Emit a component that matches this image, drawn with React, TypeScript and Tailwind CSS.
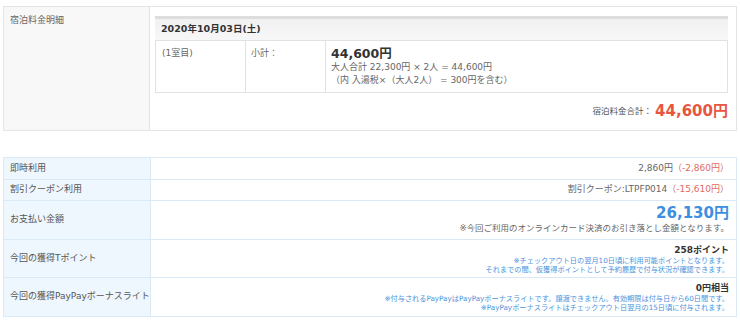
import React from "react";

const font = { fontFamily: '"DejaVu Sans", "Noto Sans CJK JP", sans-serif' };

function Row({
  label,
  h,
  last,
  children,
}: {
  label: string;
  h: string;
  last?: boolean;
  children: React.ReactNode;
}) {
  return (
    <div className={`flex ${h} ${last ? "" : "border-b border-[#d9e9f6]"}`}>
      <div className="w-[147px] shrink-0 bg-[#eef6fe] border-r border-[#d9e9f6] pl-[6px] flex items-center text-[9px] text-[#555]">
        {label}
      </div>
      <div className="flex-1 flex flex-col justify-center items-end pr-[7px] text-right">
        {children}
      </div>
    </div>
  );
}

export default function App() {
  return (
    <div className="w-[740px] h-[324px] bg-white overflow-hidden" style={font}>
      {/* top panel */}
      <div className="mx-[3px] mt-[6px] flex border border-[#e4e4e4] h-[125px]">
        <div className="w-[146px] shrink-0 bg-[#f8f8f8] border-r border-[#e4e4e4] pl-[6px] pt-[7px] text-[9px] text-[#666]">
          宿泊料金明細
        </div>
        <div className="flex-1 pl-[5px] pr-[8px] pt-[9px]">
          <div className="h-[24px] border-t-[3px] border-[#dedede] bg-gradient-to-b from-[#f1f1f1] to-[#f7f7f7] flex items-center pl-[6px] text-[9.5px] font-bold text-[#333]">
            2020年10月03日(土)
          </div>
          <div className="flex h-[53px] border border-[#e2e2e2] text-[9px] text-[#666]">
            <div className="w-[90px] border-r border-[#e2e2e2] pl-[6px] pt-[6px]">(1室目)</div>
            <div className="w-[80px] border-r border-[#e2e2e2] pl-[5px] pt-[6px]">小計：</div>
            <div className="flex-1 pl-[5px] pt-[5px]">
              <div className="text-[12.5px] font-bold text-[#333] leading-[15px]">44,600円</div>
              <div className="leading-[13px]">大人合計 22,300円 × 2人 = 44,600円</div>
              <div className="leading-[13px]">（内 入湯税×（大人2人） = 300円を含む）</div>
            </div>
          </div>
          <div className="h-[36px] flex items-center justify-end">
            <span className="text-[8.5px] text-[#555] mr-[3px]">宿泊料金合計：</span>
            <span className="text-[15px] font-bold text-[#e8563f]">44,600円</span>
          </div>
        </div>
      </div>

      {/* bottom table */}
      <div className="mx-[3px] mt-[26px] border border-[#d9e9f6]">
        <Row label="即時利用" h="h-[22px]">
          <div className="text-[9px] text-[#666]">
            2,860円<span className="text-[#e06a62]">（-2,860円）</span>
          </div>
        </Row>
        <Row label="割引クーポン利用" h="h-[21px]">
          <div className="text-[9px] text-[#666]">
            割引クーポン:LTPFP014<span className="text-[#e06a62]">（-15,610円）</span>
          </div>
        </Row>
        <Row label="お支払い金額" h="h-[39px]">
          <div className="text-[15px] font-bold text-[#3d8fe0] leading-[17px]">26,130円</div>
          <div className="text-[8.5px] text-[#666] leading-[13px]">
            ※今回ご利用のオンラインカード決済のお引き落とし金額となります。
          </div>
        </Row>
        <Row label="今回の獲得Tポイント" h="h-[38px]">
          <div className="text-[9px] font-bold text-[#333] leading-[12px]">258ポイント</div>
          <div className="text-[7.2px] text-[#4b93dc] leading-[9px]">
            ※チェックアウト日の翌月10日頃に利用可能ポイントとなります。
          </div>
          <div className="text-[7.2px] text-[#4b93dc] leading-[9px]">
            それまでの間、仮獲得ポイントとして予約履歴で付与状況が確認できます。
          </div>
        </Row>
        <Row label="今回の獲得PayPayボーナスライト" h="h-[38px]" last>
          <div className="text-[9px] font-bold text-[#333] leading-[12px]">0円相当</div>
          <div className="text-[7.2px] text-[#4b93dc] leading-[9px]">
            ※付与されるPayPayはPayPayボーナスライトです。譲渡できません。有効期限は付与日から60日間です。
          </div>
          <div className="text-[7.2px] text-[#4b93dc] leading-[9px]">
            ※PayPayボーナスライトはチェックアウト日翌月の15日頃に付与されます。
          </div>
        </Row>
      </div>
    </div>
  );
}
